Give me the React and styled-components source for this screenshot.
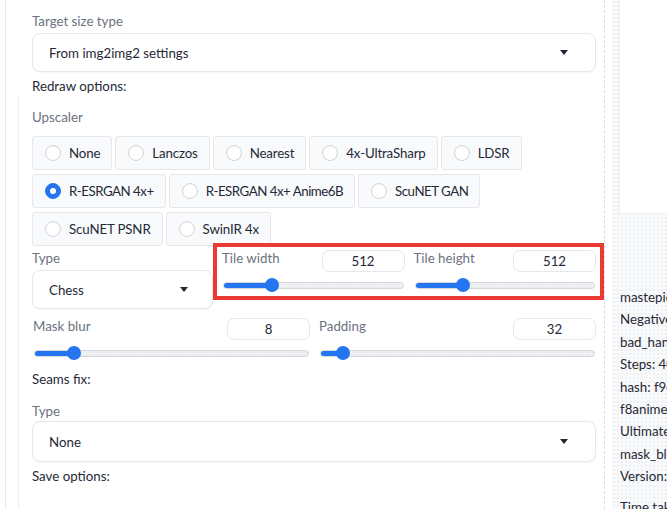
import React from "react";
import styled, { createGlobalStyle } from "styled-components";

const GlobalStyle = createGlobalStyle`
  html, body {
    margin: 0;
    padding: 0;
    background: #ffffff;
  }
  body {
    font-family: "Lato", "Noto Sans", sans-serif;
    font-size: 13.3px;
    color: #1f2937;
  }
`;

const Page = styled.div`
  display: flex;
  width: 667px;
  height: 509px;
  overflow: hidden;
  padding-left: 5px;
  box-sizing: border-box;
`;

const LeftPanel = styled.div`
  flex: 0 0 600px;
  box-sizing: border-box;
  border-left: 1px solid #e5e7eb;
  border-right: 1px dashed #d9dce1;
  padding: 11px 8px 0 26px;
  display: flex;
  flex-direction: column;
`;

const SubGroup = styled.div`
  margin-left: -14px;
  padding-left: 13px;
  padding-top: ${p => p.$pt || 0}px;
  border-left: 1px solid #eceef1;
  flex: 1;
  display: flex;
  flex-direction: column;
`;

const RightPanel = styled.div`
  flex: 1;
  margin-left: 7px;
  padding-left: 7px;
  background-color: #f9fafb;
  background-image: radial-gradient(#eceef1 0.7px, transparent 0.8px);
  background-size: 4px 4px;
  display: flex;
  flex-direction: column;
  overflow: hidden;
`;

const PreviewBox = styled.div`
  flex-shrink: 0;
  height: 213px;
  background: #ffffff;
  border-left: 1px solid #f0f1f3;
  border-bottom: 1px solid #f0f1f3;
`;

const InfoText = styled.div`
  flex-shrink: 0;
  margin-top: 72px;
  padding-left: 1px;
  color: #1f2937;
  white-space: nowrap;
`;

const InfoLine = styled.div`
  line-height: 22.4px;
  margin-top: ${p => (p.$gap ? "8px" : "0")};
`;

const Label = styled.div`
  line-height: 20px;
  color: #6b7280;
  margin-top: ${p => p.$mt || 0}px;
`;

const Heading = styled.div`
  line-height: 20px;
  color: #1f2937;
  margin-top: ${p => p.$mt || 0}px;
`;

const Dropdown = styled.div`
  height: ${p => p.$h || 39}px;
  box-sizing: border-box;
  margin-top: ${p => p.$mt || 0}px;
  border: 1px solid #e5e7eb;
  border-radius: 8px;
  box-shadow: 0 1px 2px rgba(0, 0, 0, 0.04);
  display: flex;
  align-items: center;
  justify-content: space-between;
  padding: 0 ${p => p.$pr || 27}px 0 16px;
  background: #ffffff;
  color: #1f2937;
`;

const Caret = styled.span`
  width: 0;
  height: 0;
  border-left: 4px solid transparent;
  border-right: 4px solid transparent;
  border-top: 5px solid #1f2937;
`;

const RadioGroup = styled.div`
  margin-top: 9px;
  display: flex;
  flex-direction: column;
  gap: 4px;
`;

const RadioRow = styled.div`
  display: flex;
  gap: 3px;
`;

const RadioItem = styled.label`
  flex-shrink: 0;
  height: 34px;
  box-sizing: border-box;
  display: flex;
  align-items: center;
  gap: 8px;
  padding: 0 11px 0 12px;
  background: #f9fafb;
  border: 1px solid #e5e7eb;
  border-radius: 3px;
  color: #1f2937;
  white-space: nowrap;
  letter-spacing: ${p => (p.$caps ? "-0.5px" : "-0.15px")};
`;

const RadioCircle = styled.span`
  flex-shrink: 0;
  width: 16px;
  height: 16px;
  box-sizing: border-box;
  border-radius: 50%;
  border: 1px solid ${p => (p.$checked ? "#2575f0" : "#d1d5db")};
  background: ${p => (p.$checked ? "#2575f0" : "#ffffff")};
  box-shadow: inset 0 1px 1px rgba(0, 0, 0, 0.04);
  display: flex;
  align-items: center;
  justify-content: center;
  &::after {
    content: "";
    width: 6px;
    height: 6px;
    border-radius: 50%;
    background: #ffffff;
    display: ${p => (p.$checked ? "block" : "none")};
  }
`;

const TileRow = styled.div`
  margin-top: 2px;
  display: grid;
  grid-template-columns: 181px 1fr;
  gap: 8px;
`;

const Column = styled.div`
  display: flex;
  flex-direction: column;
`;

const Highlight = styled.div`
  position: relative;
  align-self: start;
  display: grid;
  grid-template-columns: 1fr 1fr;
  gap: 8px;
  &::after {
    content: "";
    position: absolute;
    top: -5px;
    left: -8px;
    right: -8px;
    bottom: -8px;
    border: 4px solid #ea3a33;
    pointer-events: none;
  }
`;

const PairRow = styled.div`
  margin-top: 7px;
  display: grid;
  grid-template-columns: 1fr 1fr;
  gap: 8px;
`;

const SliderHead = styled.div`
  height: 24px;
  display: flex;
  align-items: flex-start;
  justify-content: space-between;
  padding-left: 1px;
  color: #6b7280;
  line-height: 20px;
`;

const NumberBox = styled.div`
  margin-top: 2px;
  width: 83px;
  height: 22px;
  box-sizing: border-box;
  border: 1px solid #e5e7eb;
  border-radius: 7px;
  display: flex;
  align-items: center;
  justify-content: center;
  color: #1f2937;
  background: #ffffff;
`;

const SliderTrack = styled.div`
  position: relative;
  margin: 6px 1px 0 2px;
  height: 14px;
  display: flex;
  align-items: center;
`;

const TrackBar = styled.div`
  flex: 1;
  height: 7px;
  border-radius: 4px;
  box-sizing: border-box;
  border: 1px solid #d4d7dc;
  background-color: #eef0f2;
  background-image: radial-gradient(#dfe2e6 0.6px, transparent 0.7px);
  background-size: 3px 3px;
  overflow: hidden;
  display: flex;
`;

const TrackFill = styled.div`
  height: 100%;
  background: #2575f0;
`;

const Thumb = styled.div`
  position: absolute;
  top: 0;
  width: 14px;
  height: 14px;
  margin-left: -7px;
  border-radius: 50%;
  background: #2575f0;
`;

const Slider = ({ label, value, min, max }) => {
  const frac = (value - min) / (max - min);
  const pos = `calc(7px + ${frac} * (100% - 14px))`;
  return (
    <Column>
      <SliderHead>
        <span>{label}</span>
        <NumberBox>{value}</NumberBox>
      </SliderHead>
      <SliderTrack>
        <TrackBar>
          <TrackFill style={{ width: pos }} />
        </TrackBar>
        <Thumb style={{ left: pos }} />
      </SliderTrack>
    </Column>
  );
};

const upscalerRows = [
  ["None", "Lanczos", "Nearest", "4x-UltraSharp", "LDSR"],
  ["R-ESRGAN 4x+", "R-ESRGAN 4x+ Anime6B", "ScuNET GAN"],
  ["ScuNET PSNR", "SwinIR 4x"],
];

const infoLines = [
  "mastepiece, best quality, 1girl",
  "Negative prompt: EasyNegative,",
  "bad_hands_5, worst quality",
  "Steps: 40, Sampler: DPM++ 2M Karras",
  "hash: f94d8a2c1b, Model:",
  "f8animeMix_v10, Denoising strength: 0.3,",
  "Ultimate SD upscale upscaler: R-ESRGAN",
  "mask_blur: 8, Ultimate SD upscale padding",
  "Version: v1.2.1",
];

export default function App() {
  const selected = "R-ESRGAN 4x+";
  return (
    <>
      <GlobalStyle />
      <Page>
        <LeftPanel>
          <Label>Target size type</Label>
          <Dropdown $mt={2}>
            <span>From img2img2 settings</span>
            <Caret />
          </Dropdown>
          <Heading $mt={4}>Redraw options:</Heading>
          <SubGroup $pt={11}>
            <Label>Upscaler</Label>
            <RadioGroup>
              {upscalerRows.map((row, i) => (
                <RadioRow key={i}>
                  {row.map(name => (
                    <RadioItem key={name} $caps={i === 1}>
                      <RadioCircle $checked={name === selected} />
                      {name}
                    </RadioItem>
                  ))}
                </RadioRow>
              ))}
            </RadioGroup>
            <TileRow>
              <Column>
                <Label>Type</Label>
                <Dropdown $mt={2} $pr={24}>
                  <span>Chess</span>
                  <Caret />
                </Dropdown>
              </Column>
              <Highlight>
                <Slider label="Tile width" value={512} min={0} max={2048} />
                <Slider label="Tile height" value={512} min={0} max={2048} />
              </Highlight>
            </TileRow>
            <PairRow>
              <Slider label="Mask blur" value={8} min={0} max={64} />
              <Slider label="Padding" value={32} min={0} max={512} />
            </PairRow>
            <Heading $mt={9}>Seams fix:</Heading>
            <Label $mt={12}>Type</Label>
            <Dropdown $h={41}>
              <span>None</span>
              <Caret />
            </Dropdown>
            <Heading $mt={4}>Save options:</Heading>
          </SubGroup>
        </LeftPanel>
        <RightPanel>
          <PreviewBox />
          <InfoText>
            {infoLines.map(line => (
              <InfoLine key={line}>{line}</InfoLine>
            ))}
            <InfoLine $gap>Time taken: 1m 12.4s</InfoLine>
          </InfoText>
        </RightPanel>
      </Page>
    </>
  );
}
